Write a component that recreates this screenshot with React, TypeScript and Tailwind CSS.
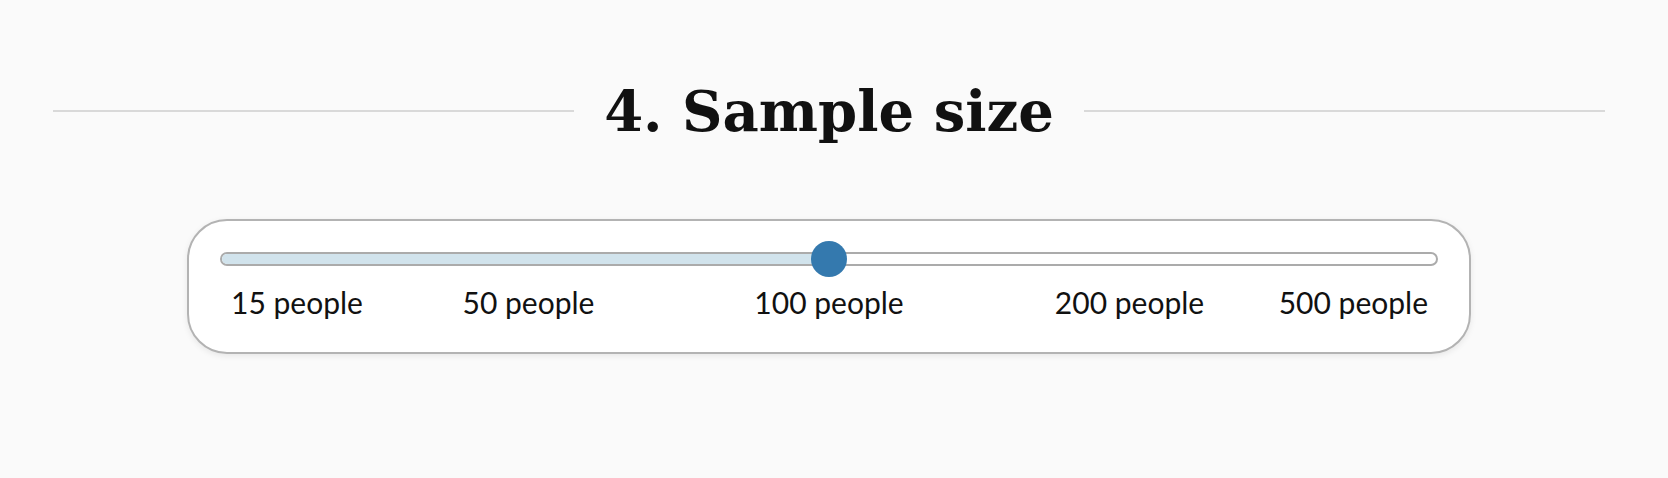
import React from 'react';

const ticks = [
  { label: '15 people', pos: 'left-[11px]' },
  { label: '50 people', pos: 'left-[calc(25%+4px)] -translate-x-1/2' },
  { label: '100 people', pos: 'left-[50%] -translate-x-1/2' },
  { label: '200 people', pos: 'left-[calc(75%-4px)] -translate-x-1/2' },
  { label: '500 people', pos: 'right-[10px]' },
];

function SampleSlider() {
  return (
    <div className="w-[1284px] mx-auto mt-[80px] bg-white border-2 border-[#b3b3b3] rounded-[40px] shadow-[0_2px_6px_rgba(0,0,0,0.08)] px-[31px] pt-[31px] pb-[32px]">
      <div className="relative">
        <div className="h-[14px] rounded-full border-2 border-[#ababab] bg-white overflow-hidden">
          <div className="h-full w-1/2 bg-[#d1e3ec]" />
        </div>
        {/* thumb */}
        <div className="absolute left-1/2 top-1/2 -translate-x-1/2 -translate-y-1/2 w-[36px] h-[36px] rounded-full bg-[#3479ae]" />
      </div>
      <div className="relative h-[36px] mt-[18px] font-['Lato',sans-serif] text-[30px] leading-[36px] text-[#111]">
        {ticks.map((t) => (
          <span key={t.label} className={`absolute top-0 whitespace-nowrap ${t.pos}`}>
            {t.label}
          </span>
        ))}
      </div>
    </div>
  );
}

export default function App() {
  return (
    <div className="min-h-[478px] bg-[#fafafa] pl-[53px] pr-[63px] pt-[83px]">
      <div className="flex items-center gap-[30px]">
        <div className="flex-1 h-[2px] bg-[#d9d9d9]" />
        <h2 className="font-['DejaVu_Serif',serif] font-bold text-[56px] leading-[56px] text-[#111] whitespace-nowrap">
          4. Sample size
        </h2>
        <div className="flex-1 h-[2px] bg-[#d9d9d9]" />
      </div>
      <SampleSlider />
    </div>
  );
}
